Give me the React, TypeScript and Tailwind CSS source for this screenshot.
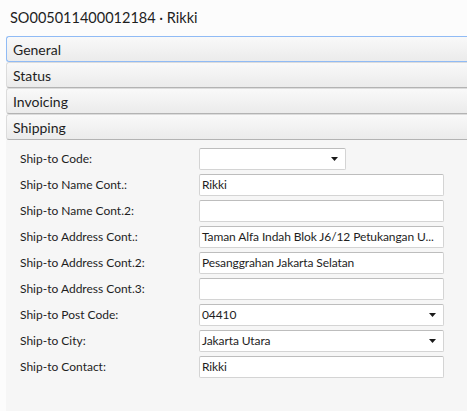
import { useState } from 'react';

type Field = {
  label: string;
  value: string;
  kind: 'text' | 'select';
  short?: boolean;
};

const fields: Field[] = [
  { label: 'Ship-to Code:', value: '', kind: 'select', short: true },
  { label: 'Ship-to Name Cont.:', value: 'Rikki', kind: 'text' },
  { label: 'Ship-to Name Cont.2:', value: '', kind: 'text' },
  { label: 'Ship-to Address Cont.:', value: 'Taman Alfa Indah Blok J6/12 Petukangan U...', kind: 'text' },
  { label: 'Ship-to Address Cont.2:', value: 'Pesanggrahan Jakarta Selatan', kind: 'text' },
  { label: 'Ship-to Address Cont.3:', value: '', kind: 'text' },
  { label: 'Ship-to Post Code:', value: '04410', kind: 'select' },
  { label: 'Ship-to City:', value: 'Jakarta Utara', kind: 'select' },
  { label: 'Ship-to Contact:', value: 'Rikki', kind: 'text' },
];

const sections = ['General', 'Status', 'Invoicing', 'Shipping'];

function Arrow() {
  return (
    <svg width="7" height="4" viewBox="0 0 7 4" className="shrink-0">
      <path d="M0 0h7L3.5 4z" fill="#1a1a1a" />
    </svg>
  );
}

function SectionHeader({ title, focused }: { title: string; focused: boolean }) {
  return (
    <div
      className={
        focused
          ? 'h-[26px] flex items-center pl-[6px] rounded-l-[3px] border border-r-0 border-[#90bbf5] bg-gradient-to-b from-[#f9f9f9] to-[#ebebeb] text-[14px] text-[#1e1e1e]'
          : 'h-[26px] flex items-center pl-[6px] rounded-l-[3px] border border-r-0 border-[#dcdcdc] border-b-[#b3b3b3] bg-gradient-to-b from-[#f9f9f9] to-[#ebebeb] text-[14px] text-[#1e1e1e]'
      }
    >
      {title}
    </div>
  );
}

export default function App() {
  const [open] = useState('Shipping');

  return (
    <div
      className="w-[467px] h-[411px] overflow-hidden bg-[#fcfcfc] text-[#1e1e1e]"
      style={{ fontFamily: 'Lato, "Noto Sans", sans-serif' }}
    >
      <div className="h-[36px] flex items-center pl-[10px] text-[14.5px]">SO005011400012184 · Rikki</div>
      <div className="ml-[6px] flex flex-col">
        {sections.map((s) => (
          <SectionHeader key={s} title={s} focused={s === 'General'} />
        ))}
        {open === 'Shipping' && (
          <div className="bg-[#f6f6f6] h-[300px] pt-[8px] pl-[14px] flex flex-col gap-[4px]">
            {fields.map((f) => (
              <div key={f.label} className="h-[22px] flex items-center">
                <div className="w-[179px] text-[12px]">{f.label}</div>
                <div
                  className={
                    (f.short ? 'w-[147px]' : 'w-[245px]') +
                    (f.kind === 'select' ? ' pr-[7px]' : ' pr-[1px]') +
                    ' h-[22px] flex items-center justify-between pl-[2px] bg-white border border-[#d4d4d4] border-t-[#bdbdbd] rounded-[2px] text-[12px]'
                  }
                >
                  <span className="whitespace-nowrap tracking-[-0.1px]">{f.value}</span>
                  {f.kind === 'select' && <Arrow />}
                </div>
              </div>
            ))}
          </div>
        )}
      </div>
    </div>
  );
}
